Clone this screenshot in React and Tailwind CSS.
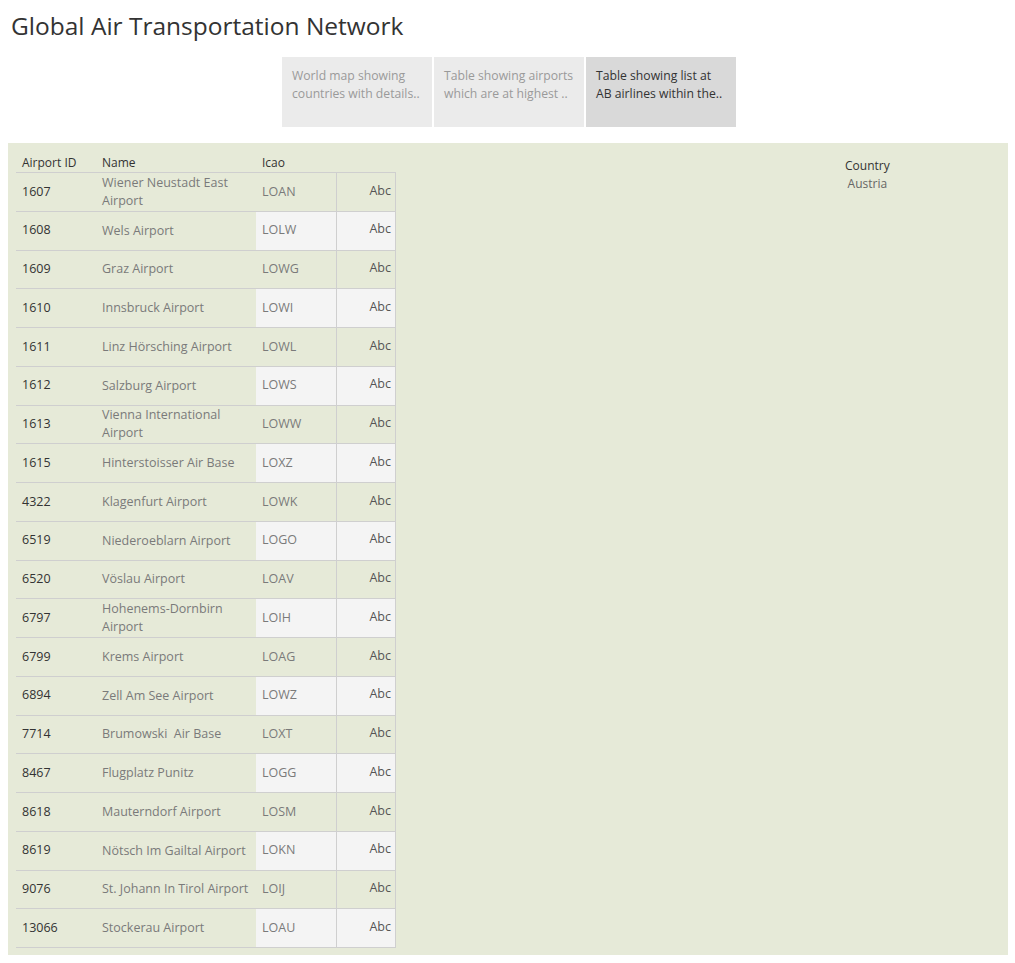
import React from "react";

const rows = [
  ["1607", ["Wiener Neustadt East", "Airport"], "LOAN"],
  ["1608", ["Wels Airport"], "LOLW"],
  ["1609", ["Graz Airport"], "LOWG"],
  ["1610", ["Innsbruck Airport"], "LOWI"],
  ["1611", ["Linz Hörsching Airport"], "LOWL"],
  ["1612", ["Salzburg Airport"], "LOWS"],
  ["1613", ["Vienna International", "Airport"], "LOWW"],
  ["1615", ["Hinterstoisser Air Base"], "LOXZ"],
  ["4322", ["Klagenfurt Airport"], "LOWK"],
  ["6519", ["Niederoeblarn Airport"], "LOGO"],
  ["6520", ["Vöslau Airport"], "LOAV"],
  ["6797", ["Hohenems-Dornbirn", "Airport"], "LOIH"],
  ["6799", ["Krems Airport"], "LOAG"],
  ["6894", ["Zell Am See Airport"], "LOWZ"],
  ["7714", ["Brumowski\u00a0 Air Base"], "LOXT"],
  ["8467", ["Flugplatz Punitz"], "LOGG"],
  ["8618", ["Mauterndorf Airport"], "LOSM"],
  ["8619", ["Nötsch Im Gailtal Airport"], "LOKN"],
  ["9076", ["St. Johann In Tirol Airport"], "LOIJ"],
  ["13066", ["Stockerau Airport"], "LOAU"],
];

const tabs = [
  ["World map showing", "countries with details..", false],
  ["Table showing airports", "which are at highest ..", false],
  ["Table showing list at", "AB airlines within the..", true],
];

export default function App() {
  return (
    <div
      className="w-[1015px] h-[963px] bg-white text-[#333]"
      style={{ fontFamily: '"Open Sans", "Noto Sans", sans-serif' }}
    >
      <div className="h-[57px] pl-[11px] pt-[8px]">
        <h1 className="text-[24.5px] leading-[36px] text-[#333]">
          Global Air Transportation Network
        </h1>
      </div>
      <div className="flex justify-center gap-[2px] pl-[3px]">
        {tabs.map(([a, b, active], i) => (
          <div
            key={i}
            className={`w-[150px] h-[70px] pl-[10px] pt-[10px] text-[12.2px] leading-[18px] ${
              active ? "bg-[#d9d9d9] text-[#333]" : "bg-[#ebebeb] text-[#9a9a9a]"
            }`}
          >
            <div className="whitespace-nowrap">{a}</div>
            <div className="whitespace-nowrap">{b}</div>
          </div>
        ))}
      </div>
      <div className="mt-[16px] mx-[8px] w-[1000px] h-[812px] bg-[#e6ead8] flex">
        <div className="pl-[8px] pt-[10px]">
          <div className="flex h-[19px] text-[12px] leading-[19px] text-[#333]">
            <div className="w-[80px] pl-[6px]">Airport ID</div>
            <div className="w-[160px] pl-[6px]">Name</div>
            <div className="w-[80px] pl-[6px]">Icao</div>
          </div>
          <div className="w-[380px] border-t border-[#cfcfcf]">
            {rows.map(([id, name, icao], i) => {
              const band = i % 2 === 1;
              return (
                <div
                  key={id}
                  className="flex h-[38.75px] border-b border-[#cfcfcf] text-[12.5px]"
                >
                  <div className="w-[80px] pl-[6px] flex items-center text-[#333]">
                    {id}
                  </div>
                  <div className="w-[160px] pl-[6px] flex flex-col justify-center leading-[18px] text-[#7a7a7a] whitespace-nowrap">
                    {name.map((n, k) => (
                      <div key={k}>{n}</div>
                    ))}
                  </div>
                  <div
                    className={`w-[80px] pl-[6px] flex items-center text-[#7a7a7a] ${
                      band ? "bg-[#f4f4f4]" : ""
                    }`}
                  >
                    {icao}
                  </div>
                  <div
                    className={`w-[60px] border-l border-r border-[#cfcfcf] flex items-center justify-end pr-[4px] pb-[2px] text-[#555] ${
                      band ? "bg-[#f4f4f4]" : ""
                    }`}
                  >
                    Abc
                  </div>
                </div>
              );
            })}
          </div>
        </div>
        <div className="ml-[449px] pt-[14px] text-[12px] leading-[18px] flex flex-col items-center">
          <div className="text-[#333]">Country</div>
          <div className="text-[#666]">Austria</div>
        </div>
      </div>
    </div>
  );
}
